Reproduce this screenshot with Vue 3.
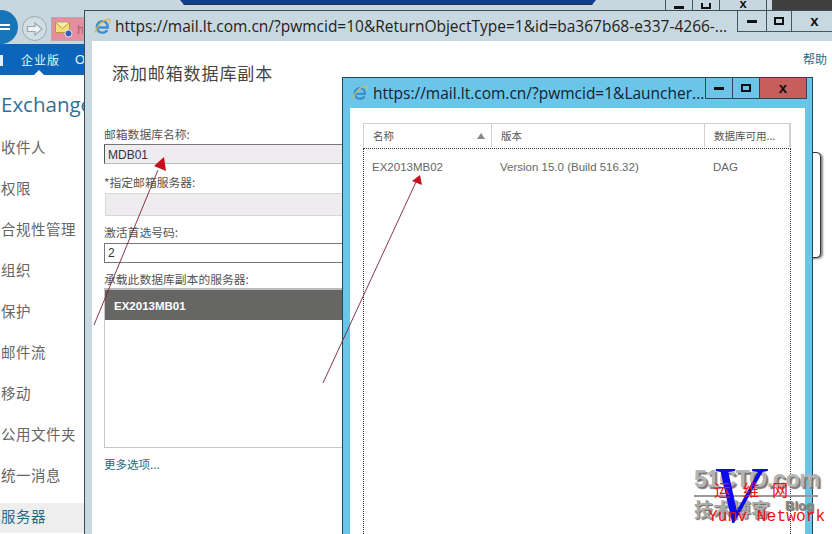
<script setup>
const navItems = ['收件人', '权限', '合规性管理', '组织', '保护', '邮件流', '移动', '公用文件夹', '统一消息', '服务器']
</script>

<template>
  <div class="desk">
    <div class="browser-top">
      <div class="blue-strip"></div>
      <div class="top-btns"><span class="tb"><i class="min"></i></span><span class="tb"><i class="max"></i></span><span class="tb x">x</span></div>
      <div class="dark-corner"></div>
    </div>
    <div class="circle-back">
      <svg width="14" height="12" viewBox="0 0 14 12"><path d="M0 4H11V2L14 6L11 10V8H0" fill="none" stroke="#fff" stroke-width="2"/></svg>
    </div>
    <div class="circle-fwd">
      <svg width="18" height="16" viewBox="0 0 18 16"><path d="M1.500 5.500H9V2L16 8L9 14V10.500H1.500Z" fill="#eef3f6" stroke="#9aa7ad" stroke-width="1.200"/></svg>
    </div>
    <div class="tab-pink">
      <svg width="19" height="19" viewBox="0 0 19 19"><rect x="0.500" y="2.500" width="14" height="10" fill="#f6dd7a" stroke="#b59a3a"/><path d="M0.500 2.500L7.500 8.500L14.500 2.500" fill="#fbeeb0" stroke="#b59a3a"/><circle cx="13.500" cy="13.500" r="3.500" fill="#2f5fb8" stroke="#dfe6f5"/></svg>
      <span>ht</span>
    </div>
    <div class="brand-bar"><span class="brand-edge"></span><span class="brand-a">企业版</span><span class="brand-b">O</span><i class="notch"></i></div>
    <div class="side">
      <div class="exch">Exchange</div>
      <ul class="nav">
        <li v-for="(n, i) in navItems" :key="n" :class="{ on: i === navItems.length - 1 }">{{ n }}</li>
      </ul>
    </div>

    <section class="win-main">
      <header class="main-title">
        <svg class="ie" width="17" height="17" viewBox="0 0 18 18"><path d="M4 10H14.500C14.800 6 12.500 3.500 9 3.500C5.500 3.500 3 6 3 9.500C3 13 5.500 15.500 9 15.500C11.200 15.500 13 14.500 14 12.800" fill="none" stroke="#3d8fd0" stroke-width="2.600"/><path d="M1 15.500C3 8 10 1 16 1.500C17.500 2 17 4 16 6" fill="none" stroke="#e2b53c" stroke-width="1.300"/></svg>
        <span class="t-url">https://mail.lt.com.cn/?pwmcid=10&amp;ReturnObjectType=1&amp;id=ba367b68-e337-4266-...</span>
        <div class="ctl"><span class="cb"><i class="min"></i></span><span class="cb"><i class="max"></i></span><span class="cb wide">x</span></div>
      </header>
      <div class="main-body">
        <a class="help">帮助</a>
        <h1>添加邮箱数据库副本</h1>
        <form class="form">
          <label>邮箱数据库名称:</label>
          <div class="inp first">MDB01</div>
          <label>*指定邮箱服务器:</label>
          <div class="inp blank"></div>
          <label>激活首选号码:</label>
          <div class="inp plain">2</div>
          <label>承载此数据库副本的服务器:</label>
          <div class="listbox"><div class="sel">EX2013MB01</div></div>
          <a class="more">更多选项...</a>
        </form>
      </div>
    </section>

    <div class="behind-card"></div>

    <section class="win-pick">
      <header class="pick-title">
        <svg class="ie2" width="16" height="16" viewBox="0 0 18 18"><path d="M4 10H14.500C14.800 6 12.500 3.500 9 3.500C5.500 3.500 3 6 3 9.500C3 13 5.500 15.500 9 15.500C11.200 15.500 13 14.500 14 12.800" fill="none" stroke="#3d8fd0" stroke-width="2.600"/><path d="M1 15.500C3 8 10 1 16 1.500C17.500 2 17 4 16 6" fill="none" stroke="#c9c25a" stroke-width="1.300"/></svg>
        <span class="p-url">https://mail.lt.com.cn/?pwmcid=1&amp;Launcher...</span>
        <div class="pctl"><span class="pb"><i class="min"></i></span><span class="pb"><i class="max"></i></span><span class="pb red">x</span></div>
      </header>
      <div class="pick-body">
        <div class="thead">
          <div class="th c1"><span>名称</span><b class="sort"></b></div>
          <div class="th c2">版本</div>
          <div class="th c3">数据库可用...</div>
        </div>
        <div class="tbody">
          <div class="row"><span class="c1">EX2013MB02</span><span class="c2">Version 15.0 (Build 516.32)</span><span class="c3">DAG</span></div>
        </div>
      </div>
    </section>

    <svg class="arrows" width="832" height="534" viewBox="0 0 832 534">
      <g stroke="#7a2030" fill="#c8101c">
        <line x1="94" y1="325" x2="158" y2="170" stroke-width="0.900"/>
        <path d="M164 157L166 171L154 166Z" stroke="none"/>
        <line x1="323" y1="383" x2="416" y2="182" stroke-width="0.900"/>
        <path d="M420 175L422 185L412 181Z" stroke="none"/>
      </g>
    </svg>

    <div class="mark">
      <div class="mark-a">51CTO.com</div>
      <i class="mark-rule"></i>
      <div class="mark-b"><span>技术博客</span><em>Blog</em></div>
      <div class="mark-v">V</div>
      <div class="mark-cn">运维网</div>
      <div class="mark-en">Yunv Network</div>
    </div>
  </div>
</template>

<style>
html, body { margin: 0; overflow: hidden; }
</style>

<style scoped>
.desk { position: relative; width: 832px; height: 534px; overflow: hidden; background: #c8d7df; font-family: "Noto Sans CJK SC", "Liberation Sans", sans-serif; color: #444; }
.browser-top { position: absolute; inset: 0 0 auto 0; height: 11px; }
.blue-strip { position: absolute; left: 180px; width: 416px; top: 0; height: 4px; background: #0f3f8c; clip-path: polygon(0 0, 100% 0, 99% 100%, 1% 100%); border-bottom: 1px solid #234; }
.top-btns { position: absolute; left: 665px; top: 0; display: flex; height: 10px; border: 1px solid #46565e; border-top: 0; }
.tb { width: 26px; border-right: 1px solid #46565e; display: flex; justify-content: center; align-items: flex-end; font: bold 13px/7px "Liberation Sans", sans-serif; color: #111; overflow: hidden; }
.tb i.min { width: 10px; height: 3px; background: #111; margin-bottom: 1px; }
.tb i.max { width: 10px; height: 6px; border: 2px solid #111; border-top: 0; margin-bottom: 1px; box-sizing: border-box; }
.tb.x { width: 46px; border-right: 0; align-items: flex-start; }
.dark-corner { position: absolute; left: 772px; right: 0; top: 0; height: 10px; background: #3f3f3f; }
.circle-back { position: absolute; left: -16px; top: 10px; width: 34px; height: 34px; border-radius: 50%; background: #1775b9; display: flex; align-items: center; justify-content: flex-end; }
.circle-back svg { margin-right: 8px; transform: scaleX(-1); }
.circle-fwd { position: absolute; left: 22px; top: 16px; width: 25px; height: 25px; box-sizing: border-box; border: 1px solid #9aa9b1; border-radius: 50%; background: #d2dee4; display: flex; align-items: center; justify-content: center; }
.tab-pink { position: absolute; left: 51px; top: 17px; width: 33px; height: 24px; background: #e78da0; border: 1px solid #b5a8ae; box-sizing: border-box; display: flex; align-items: center; gap: 3px; padding-left: 3px; font: 13px "Liberation Sans", sans-serif; color: #a5606f; overflow: hidden; white-space: nowrap; }
.tab-pink svg { flex: none; }
.brand-bar { position: absolute; left: 0; top: 44px; width: 84px; height: 31px; background: #0b66bb; color: #eaf3fb; display: flex; align-items: center; white-space: nowrap; }
.brand-edge { position: absolute; left: 0; top: 11px; width: 3px; height: 11px; background: #e6eef6; }
.brand-a { margin-left: 21px; font-size: 12px; letter-spacing: 1px; flex: none; }
.brand-b { margin-left: 15px; font: 13px "Liberation Sans", sans-serif; }
.notch { position: absolute; left: 34px; bottom: 0; border: 5px solid transparent; border-bottom-color: #fff; border-top: 0; }
.side { position: absolute; left: 0; top: 75px; width: 84px; height: 459px; background: #fff; overflow: hidden; }
.exch { margin: 14px 0 0 1px; height: 30px; font: 20.500px/30px "Open Sans", "Liberation Sans", sans-serif; color: #2e7298; white-space: nowrap; }
.nav { list-style: none; margin: 13px 0 0; padding: 0; }
.nav li { height: 41px; line-height: 30px; padding-left: 1px; font-size: 14.500px; color: #666; letter-spacing: 0.500px; white-space: nowrap; }
.nav li.on { background: #eeeeee; color: #1f6f8a; margin-top: 2px; height: 30px; line-height: 26px; }
.win-main { position: absolute; left: 84px; top: 10px; width: 760px; height: 540px; box-sizing: border-box; border: 1px solid #3d4d55; background: #c8d8e0; padding: 0 7px; }
.main-title { height: 30px; display: flex; align-items: center; position: relative; }
.ie { margin-left: 2px; flex: none; }
.t-url { margin-left: 4px; font: 15.500px "Open Sans", "Liberation Sans", sans-serif; color: #222; white-space: nowrap; }
.ctl { position: absolute; left: 645px; top: 0; display: flex; height: 20px; border: 1px solid #46565e; border-top: 0; }
.cb { width: 28px; border-right: 1px solid #46565e; display: flex; justify-content: center; align-items: center; font: bold 15px/14px "Liberation Sans", sans-serif; color: #111; }
.cb:nth-child(2) { width: 24px; }
.cb:last-child { border-right: 0; }
.cb.wide { width: 45px; }
i.min { display: block; width: 10px; height: 3px; background: #111; }
i.max { display: block; width: 10px; height: 8px; border: 2px solid #111; box-sizing: border-box; }
.main-body { position: relative; height: 500px; background: #fff; padding-left: 12px; }
.help { position: absolute; left: 711px; top: 9px; font-size: 12px; color: #1d6c85; }
h1 { margin: 0; padding: 19px 0 0 8px; font-weight: 400; font-size: 17px; line-height: 26px; letter-spacing: 0.900px; color: #444; white-space: nowrap; }
.form { display: flex; flex-direction: column; width: 240px; margin-top: 40px; align-items: stretch; }
label { font-size: 11.800px; line-height: 16px; color: #555; white-space: nowrap; }
.inp { box-sizing: border-box; height: 20px; margin-top: 2px; font: 12px/18px "Liberation Sans", sans-serif; color: #333; padding-left: 3px; }
.inp.first { background: #eeecee; border: 1px solid #bbb; border-left: 1px solid #555; border-top: 1px solid #777; margin-bottom: 10px; padding-top: 1px; }
.inp.blank { height: 23px; background: #eeecee; border: 1px solid #d6d6d6; margin: 3px 0 8px 1px; }
.inp.plain { background: #fff; border: 1px solid #777; margin: 3px 0 8px; }
.listbox { margin-top: 1px; height: 160px; box-sizing: border-box; border: 1px solid #c4c8ca; border-top: 2px solid #bbb; background: #fff; }
.sel { height: 30px; background: #666664; color: #fff; font: bold 11.500px/33px "Liberation Sans", sans-serif; padding-left: 9px; }
.more { margin-top: 8px; font-size: 11.500px; line-height: 16px; color: #1d6c85; white-space: nowrap; }
.behind-card { position: absolute; left: 800px; top: 152px; width: 21px; height: 106px; box-sizing: border-box; border: 1px solid #333; border-left: 0; border-radius: 0 5px 5px 0; box-shadow: 2px 1px 2px #888; background: #fff; }
.win-pick { position: absolute; left: 342px; top: 77px; width: 471px; height: 470px; box-sizing: border-box; border: 1px solid #1f4a5c; background: #6bc5e8; padding: 0 7px; }
.pick-title { height: 30px; display: flex; align-items: center; position: relative; }
.ie2 { margin-left: 2px; flex: none; }
.p-url { margin-left: 5px; font: 15.500px "Open Sans", "Liberation Sans", sans-serif; color: #123; white-space: nowrap; }
.pctl { position: absolute; left: 355px; top: 0; display: flex; height: 20px; border: 1px solid #2a4a58; border-top: 0; }
.pb { width: 26px; border-right: 1px solid #2a4a58; display: flex; justify-content: center; align-items: center; font: bold 15px/14px "Liberation Sans", sans-serif; color: #111; }
.pb.red { width: 46px; background: #c75e5b; border-right: 0; }
.pick-body { height: 430px; background: #fff; padding: 15px 14px 0 13px; }
.thead { display: flex; height: 24px; box-sizing: border-box; border: 1px solid #d0d0d0; border-bottom: 0; border-right-width: 2px; font-size: 10.500px; color: #555; }
.th { display: flex; align-items: center; padding-left: 9px; box-sizing: border-box; border-right: 1px solid #d0d0d0; white-space: nowrap; }
.th:last-child { border-right: 0; }
.th.c1 { width: 128px; justify-content: space-between; padding-right: 6px; }
.th.c2 { width: 213px; }
.th.c3 { flex: 1; }
.sort { width: 0; height: 0; border: 4px solid transparent; border-top: 0; border-bottom: 6px solid #888; }
.tbody { box-sizing: border-box; height: 400px; margin-top: 1px; border: 1px dotted #333; border-bottom: 0; padding-top: 10px; font: 11.500px/16px "Liberation Sans", sans-serif; color: #666; }
.row { display: flex; }
.row .c1 { width: 128px; padding-left: 8px; box-sizing: border-box; }
.row .c2 { width: 213px; padding-left: 8px; box-sizing: border-box; }
.row .c3 { padding-left: 8px; }
.arrows { position: absolute; left: 0; top: 0; pointer-events: none; }
.mark { position: absolute; left: 694px; top: 466px; width: 138px; height: 68px; }
.mark-a { font: bold 23.500px/26px "Liberation Sans", sans-serif; color: #b4b4b4; text-shadow: 2px 2px 1px #777; letter-spacing: -0.500px; white-space: nowrap; }
.mark-rule { display: block; width: 124px; height: 2px; background: #999; margin-top: 3px; }
.mark-b { display: flex; gap: 15px; align-items: flex-start; margin-top: 1px; font-size: 19px; line-height: 22px; font-weight: 700; color: #aaa; text-shadow: 1px 1px 1px #666; white-space: nowrap; }
.mark-b em { font: bold 13px/16px "Liberation Sans", sans-serif; color: #888; }
.mark-v { position: absolute; left: 4px; top: -6px; width: 76px; text-align: center; font: italic 80px/70px "Liberation Serif", serif; color: #0a0aee; }
.mark-cn { position: absolute; left: 20px; top: 13px; font-size: 16px; line-height: 20px; letter-spacing: 13px; color: #ee1111; white-space: nowrap; width: 74px; }
.mark-en { position: absolute; left: 14px; top: 41px; font: 16.300px/20px "Liberation Mono", monospace; color: #ee1111; white-space: nowrap; }
</style>
